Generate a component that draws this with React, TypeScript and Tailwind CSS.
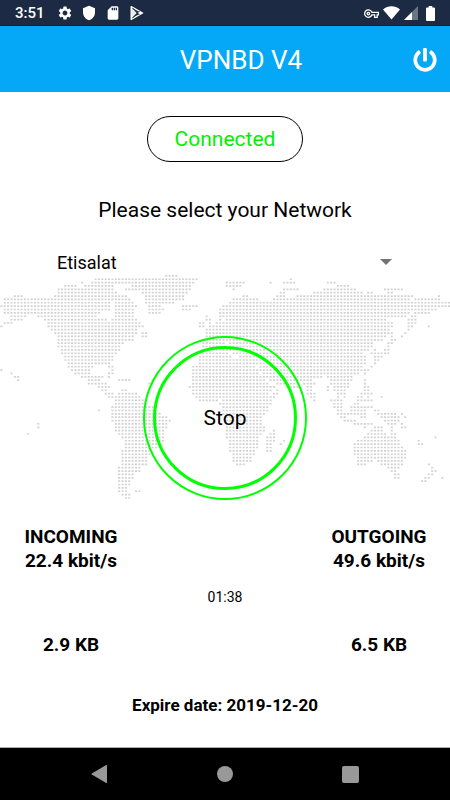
import { useState } from "react";
import { FaPowerOff } from "react-icons/fa";
import { MdSdCard, MdSettings, MdShield, MdOutlineVpnKey } from "react-icons/md";

// World map on a dot grid: one string per row, each item a column or a range of columns.
const MAP_ROWS = [
  "49-52",
  "28-58 86",
  "24 27-57 67-72 80 84-87 97-99",
  "19-22 25-33 39-56 67-71 100-103",
  "17-33 37-56 69 84-88 96-105 114-119",
  "17-34 42-55 83-84 93-107 109-110 115-116",
  "4-6 16-37 43-54 72-73 82-84 88-122 130",
  "1-38 43-54 69-76 81-121 123-130",
  "1-32 34-39 43-51 68-133",
  "0-32 34-40 44-47 54-58 66-133",
  "1-32 34-39 44-48 54-56 65-129",
  "1-29 34-39 44-47 65-121 123-127",
  "3-7 11-28 34-39 61 65-120 122-123",
  "3-6 13-31 33-40 61-62 65 67-114 121-123",
  "1-3 14-41 59-60 62 64-116 121-123",
  "0 14-42 59-60 62-116 121-122 127",
  "15-40 61-115 121",
  "16-40 42-43 61-116 120",
  "17-39 42-43 61-114 116 119",
  "17-39 60-113 116-117",
  "17-36 60-66 68-110 115-116",
  "17-35 60-65 68-110 115",
  "18-35 60-109 111 114-115",
  "18-34 60-67 69-107 110-115",
  "19-33 59-68 71-108 111-113",
  "19-33 59-108 111-112",
  "20-32 59-108 111",
  "20-27 32-33 57-75 77-107 110",
  "0 21-26 33 57-109",
  "3 22-26 32-33 57-76 78-106 108",
  "4-5 24-30 32 57-95 97-104",
  "5 26-29 35-38 57-78 80-92 98-104 108",
  "26-31 44 57-79 82-88 90-93 98-103 108",
  "29-32 56-81 85-88 91-92 97 99-103 108-109",
  "30-31 36-37 57-80 82 91-92 97 99-102 108-109",
  "31-33 35-40 57-79 81-82 91-93 100-102 107-110",
  "32-41 58-81 92-93 100 102 106-107 109 113",
  "34-42 59-64 66-80 93 98-101 106-110",
  "34-43 65-80 99-101 105-106",
  "33-46 66-79 99-101 104-110",
  "29 33-46 66-79 100-101 104-108 111-112",
  "33-47 66-78 100-108 112-117 119",
  "33-49 67-77 101-102 107-108 113-118 120",
  "33-50 67-77 102-105 114-118",
  "11 34-49 67-77 105-110 115-117 119",
  "11 34-49 67-78 108 111-113 116 119-120",
  "34-48 67-78 81 110-113 116",
  "8 35-48 67-77 80-81 109-114 116-117",
  "36-48 67-76 79-81 108-117 129",
  "37-48 68-76 79-81 84 106-118 124",
  "37-47 68-76 79-80 83 105-118 124-125",
  "37-46 68-76 79-80 105-119",
  "36-44 68-75 79-80 105-120",
  "36-44 69-75 105-120",
  "36-43 69-74 106-120",
  "36-43 69-74 106-110 112-119",
  "36-43 70-72 106-108 113-119 127",
  "35-41 115-118 128",
  "35-41 116-117 128-129",
  "35-39 117-118 127-128",
  "35-39 117-118 126-127 131",
  "35-38 125-126",
  "35-38",
  "35-37",
  "35-37 40-41",
  "36-38",
  "37-38",
];

const mapPath = MAP_ROWS.map((row, y) =>
  row
    .split(" ")
    .map((range) => {
      const [from, to = from] = range.split("-").map(Number);
      let dots = "";
      for (let x = from; x <= to; x++) {
        dots += `M${x * 10 + 1} ${y * 10 + 3}h6v5h-6z`;
      }
      return dots;
    })
    .join("")
).join("");

function StatusBar() {
  return (
    <div className="flex h-[26px] items-center justify-between border-b border-[#0f1a2c] bg-[#1c2b43] px-[15px] pt-px text-white">
      <div className="flex items-center">
        <span className="w-[42px] text-[15px] leading-6 font-medium">3:51</span>
        <div className="flex items-center gap-2">
          <MdSettings size={16} />
          <MdShield size={16} />
          <MdSdCard size={16} />
          <svg width="16" height="16" viewBox="0 0 16 16" aria-hidden="true">
            <path d="M2.2 1.6 13.6 8 2.2 14.4z" fill="none" stroke="currentColor" strokeWidth="1.4" strokeLinejoin="round" />
            <path d="M2.2 2v12L8 8z" fill="currentColor" opacity=".9" />
            <path d="M10 6.3 13.4 8 10 9.7 8.6 8z" fill="currentColor" />
            <path d="M3.4 2.8 10.4 10M3.4 13.2 10.4 6" stroke="#1c2b43" strokeWidth="1" />
          </svg>
        </div>
      </div>
      <div className="flex items-center">
        <MdOutlineVpnKey size={15} />
        <svg width="17" height="14" viewBox="0 0 17 14" className="ml-1" aria-hidden="true">
          <path d="M0 3.4C5-.8 12-.8 17 3.4L8.5 13.6z" fill="currentColor" />
        </svg>
        <svg width="14" height="14" viewBox="0 0 14 14" className="ml-1" aria-hidden="true">
          <path d="M14 0v14H0z" fill="currentColor" opacity=".35" />
          <path d="M8 6v8H0z" fill="currentColor" />
        </svg>
        <svg width="9" height="15" viewBox="0 0 9 15" className="ml-2" aria-hidden="true">
          <path d="M2.7 0h3.6v1.6H8q1 0 1 1V14q0 1-1 1H1q-1 0-1-1V2.6q0-1 1-1h1.7z" fill="currentColor" />
        </svg>
      </div>
    </div>
  );
}

function Total({ value }: { value: string }) {
  return <p className="w-24 text-center whitespace-nowrap">{value}</p>;
}

function Rate({ label, value }: { label: string; value: string }) {
  return (
    <div className="w-24 text-center whitespace-nowrap">
      <h2>{label}</h2>
      <p>{value}</p>
    </div>
  );
}

export default function App() {
  const [network, setNetwork] = useState("Etisalat");

  return (
    <div className="flex min-h-screen flex-col bg-white font-['Roboto',sans-serif] text-black">
      <StatusBar />
      <header className="grid h-[66px] grid-cols-[1fr_auto_1fr] items-center bg-[#05a8f7] px-[13px] pt-0.5 text-white">
        <h1 className="col-start-2 pl-8 text-[26px] leading-8">VPNBD V4</h1>
        <button type="button" aria-label="Power" className="justify-self-end">
          <FaPowerOff size={24} />
        </button>
      </header>

      <main className="flex flex-1 flex-col pt-6">
        <p className="flex h-[46px] w-[156px] items-center justify-center self-center rounded-full border border-black pt-0.5 text-[21px] text-[#00f000]">
          Connected
        </p>
        <label htmlFor="network" className="mt-8 text-center text-[21px] leading-8">
          Please select your Network
        </label>
        <div className="mx-[57px] mt-6 flex h-6 items-center">
          <select
            id="network"
            value={network}
            onChange={(event) => setNetwork(event.target.value)}
            className="-mr-5 h-6 flex-1 appearance-none bg-transparent pt-px text-lg leading-6"
          >
            <option>Etisalat</option>
          </select>
          <svg width="12" height="6" viewBox="0 0 12 6" className="pointer-events-none mr-px" aria-hidden="true">
            <path d="M0 0h12L6 6z" fill="#737373" />
          </svg>
        </div>

        <div className="grid">
          <svg viewBox="0 0 1337 671" className="col-start-1 row-start-1 w-full" aria-hidden="true">
            <path d={mapPath} fill="#d2d2d2" />
          </svg>
          <button
            type="button"
            className="col-start-1 row-start-1 grid size-[164px] place-items-center self-end justify-self-center rounded-full border-2 border-[#00ff00] p-2 text-[21px]"
          >
            <span className="grid size-full place-items-center rounded-full border-3 border-[#00ff00] pt-0.5">Stop</span>
          </button>
        </div>

        <div className="mt-[25px] flex justify-between px-[23px] text-[19px] leading-6 font-bold">
          <Rate label="INCOMING" value="22.4 kbit/s" />
          <Rate label="OUTGOING" value="49.6 kbit/s" />
        </div>
        <p className="mt-4 text-center text-sm leading-4">01:38</p>
        <div className="mt-7 flex justify-between px-[23px] text-[19px] leading-6 font-bold">
          <Total value="2.9 KB" />
          <Total value="6.5 KB" />
        </div>
        <p className="mt-9 text-center text-[17px] leading-6 font-bold">Expire date: 2019-12-20</p>
      </main>

      <nav className="flex h-[53px] items-center justify-around border-t border-[#aaa] bg-black px-9 text-[#999]">
        <button type="button" aria-label="Back">
          <svg width="17" height="18" viewBox="0 0 17 18">
            <path d="M16 .5v17q0 .8-.8.4L.8 9.4q-.6-.4 0-.8L15.2.1q.8-.4.8.4z" fill="currentColor" />
          </svg>
        </button>
        <button type="button" aria-label="Home" className="size-4 rounded-full bg-[#999]" />
        <button type="button" aria-label="Recent apps" className="size-[17px] rounded-xs bg-[#999]" />
      </nav>
    </div>
  );
}
